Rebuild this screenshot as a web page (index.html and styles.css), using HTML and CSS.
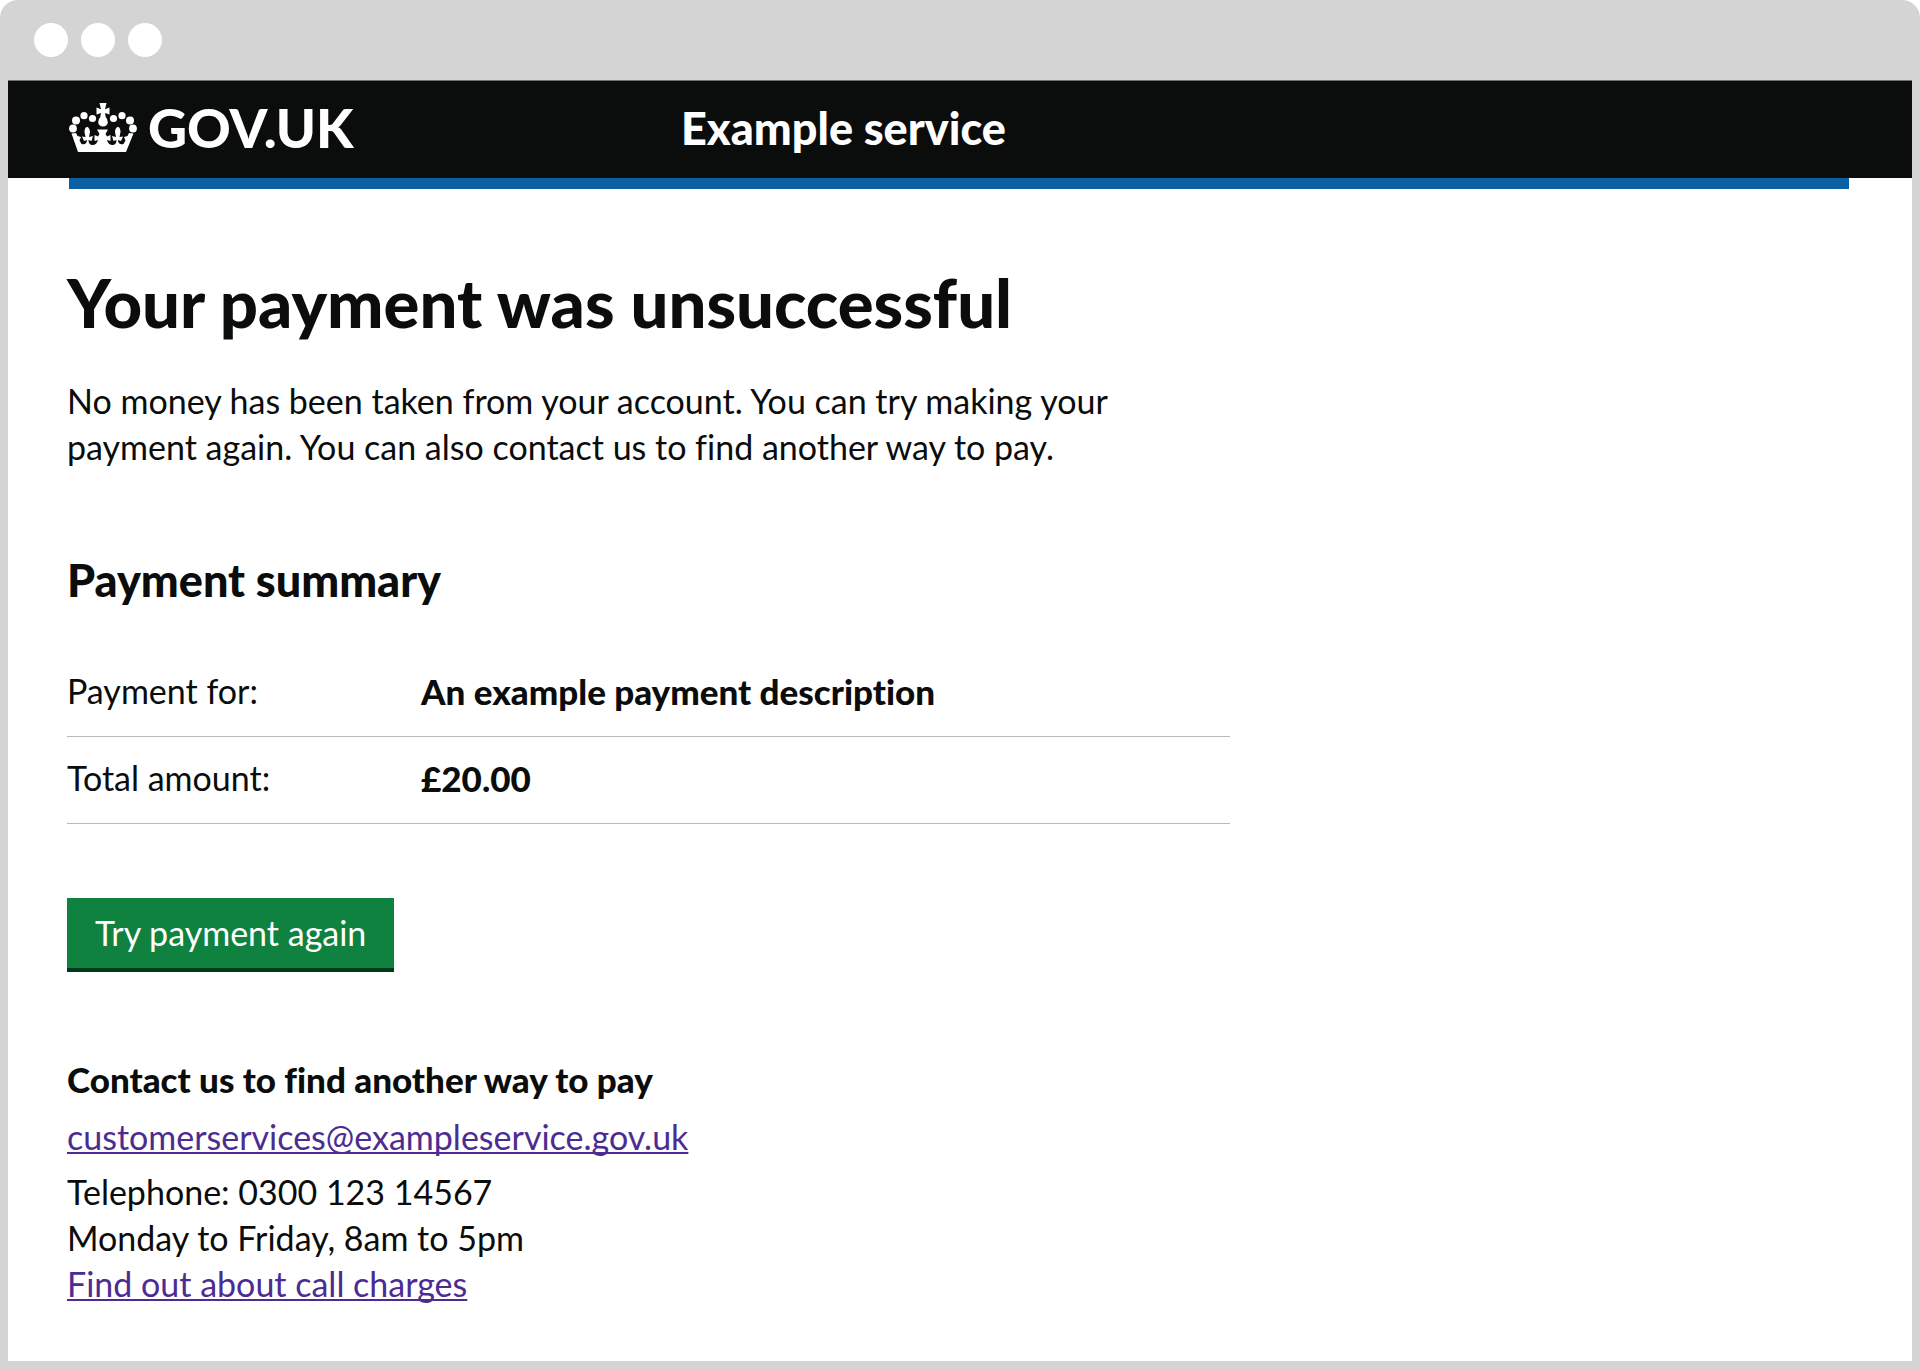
FILE: index.html
```html
<!DOCTYPE html>
<html lang="en">
<head>
  <meta charset="utf-8">
  <meta name="viewport" content="width=device-width, initial-scale=1">
  <title>Your payment was unsuccessful</title>
  <link rel="stylesheet" href="styles.css">
</head>
<body>
  <div class="window">
    <div class="window-bar" aria-hidden="true">
      <span class="dot"></span>
      <span class="dot"></span>
      <span class="dot"></span>
    </div>
    <div class="page">
      <header class="header">
        <div class="header-inner">
          <div class="logo">
            <svg class="crown" viewBox="0 0 68 49" aria-hidden="true">
              <g fill="#fff">
                <path d="M30.500 0h7l-1.500 6.200 4.500-1.700v7l-4.500-1.500.8 4.200a6 6 0 0 1 2 5c0 2.500-2 4.300-4.800 4.300s-4.800-1.800-4.800-4.300a6 6 0 0 1 2-5l.8-4.200-4.500 1.500v-7l4.500 1.700z"/>
                <circle cx="23.500" cy="15.500" r="3.600"/>
                <circle cx="15" cy="12.700" r="3.600"/>
                <circle cx="7" cy="17.400" r="4"/>
                <circle cx="4" cy="25.500" r="3.900"/>
                <circle cx="44.500" cy="15.500" r="3.600"/>
                <circle cx="53" cy="12.700" r="3.600"/>
                <circle cx="61" cy="17.400" r="4"/>
                <circle cx="64" cy="25.500" r="3.900"/>
                <path d="M2.500 30.500l4.500-.5 1.500 3 3.500 1-1.500 3.500 2 3.500c3 1 5.500-.5 5.500-4l-3 1-2-4.500 3.500.5-1-5c0-3 1-5 2.500-5s3 2 3 5l-1 5 4-1-1.500 5-3-1c0 3.500 1.500 5 4 5s5-2 5.500-5l-3.500 1v-6l3.500 1.500 1.500-2.500-2.500-4.500h11l-2.500 4.500 1.500 2.500 3.500-1.500v6l-3.500-1c.5 3 3 5 5.500 5s4-1.500 4-5l-3 1-1.500-5 4 1-1-5c0-3 1.500-5 3-5s2.500 2 2.500 5l-1 5 3.500-.5-2 4.500-3-1c0 3.500 2.500 5 5.500 4l2-3.500-1.500-3.500 3.500-1 1.500-3 4.500.5-7.500 18.500h-48z"/>
              </g>
            </svg>
            <span class="logo-text">GOV.UK</span>
          </div>
          <span class="service-name">Example service</span>
        </div>
      </header>
      <div class="accent"></div>
      <main class="main">
        <div class="column">
          <h1 class="title">Your payment was unsuccessful</h1>
          <p class="lead">No money has been taken from your account. You can try making your payment again. You can also contact us to find another way to pay.</p>
          <h2 class="subtitle">Payment summary</h2>
          <table class="summary">
            <tbody>
              <tr>
                <th scope="row">Payment for:</th>
                <td>An example payment description</td>
              </tr>
              <tr>
                <th scope="row">Total amount:</th>
                <td>£20.00</td>
              </tr>
            </tbody>
          </table>
          <button class="button" type="button">Try payment again</button>
          <h3 class="contact-title">Contact us to find another way to pay</h3>
          <p class="email"><a class="link" href="mailto:customerservices@exampleservice.gov.uk">customerservices@exampleservice.gov.uk</a></p>
          <p class="phone">Telephone: 0300 123 14567<br>Monday to Friday, 8am to 5pm<br><a class="link" href="#call-charges">Find out about call charges</a></p>
        </div>
      </main>
    </div>
  </div>
</body>
</html>
```
FILE: styles.css
```css
* {
  box-sizing: border-box;
}

body {
  margin: 0;
  background: #fff;
  color: #0b0c0c;
  font-family: Lato, "Noto Sans", sans-serif;
  font-size: 34px;
  font-variant-ligatures: none;
  line-height: 46px;
}

h1,
h2,
h3,
p {
  margin: 0;
}

.window {
  display: flex;
  flex-direction: column;
  min-height: 100vh;
  padding: 0 8px 8px;
  border-radius: 18px 18px 0 0;
  background: #d4d4d4;
}

.window-bar {
  display: flex;
  align-items: center;
  gap: 13px;
  height: 80px;
  padding-left: 26px;
}

.dot {
  width: 34px;
  height: 34px;
  border-radius: 50%;
  background: #fff;
}

.page {
  flex: 1;
  background: #fff;
}

.header {
  padding: 0 61px;
  border-top: 1px solid #6f7170;
  background: #0b0c0c;
  color: #fff;
}

.header-inner {
  display: grid;
  grid-template-columns: 612px 1fr;
  align-items: center;
  height: 97px;
  padding-bottom: 4px;
}

.logo {
  display: flex;
  align-items: center;
  gap: 11px;
}

.crown {
  width: 68px;
  height: 49px;
}

.logo-text {
  font-size: 54px;
  font-weight: 900;
}

.service-name {
  font-size: 45px;
  font-weight: 900;
}

.accent {
  height: 11px;
  margin: 0 63px 0 61px;
  background: #0b5fa3;
}

.main {
  padding: 77px 59px 52px;
}

.column {
  max-width: 1163px;
}

.title {
  margin-bottom: 40px;
  font-size: 67px;
  font-weight: 900;
  line-height: 72px;
}

.lead {
  max-width: 1100px;
  margin-bottom: 84px;
}

.subtitle {
  margin-bottom: 44px;
  font-size: 45px;
  font-weight: 900;
  line-height: 52px;
}

.summary {
  width: 100%;
  margin-bottom: 74px;
  border-spacing: 0;
  text-align: left;
}

.summary th,
.summary td {
  padding: 18px 0 22px;
  border-bottom: 1px solid #b6b8b9;
}

.summary th {
  width: 354px;
  font-weight: 400;
}

.summary td {
  font-size: 35px;
  font-weight: 900;
}

.button {
  display: block;
  margin-bottom: 84px;
  padding: 12px 28px;
  border: 0;
  border-bottom: 4px solid #00381a;
  background: #0f823f;
  color: #fff;
  font: inherit;
}

.contact-title {
  margin-bottom: 12px;
  font-size: 35px;
  font-weight: 900;
}

.email {
  margin-bottom: 9px;
}

.link {
  color: #4c2c92;
  text-decoration-thickness: 2px;
  text-underline-offset: 2px;
  text-decoration-skip-ink: none;
}
```
